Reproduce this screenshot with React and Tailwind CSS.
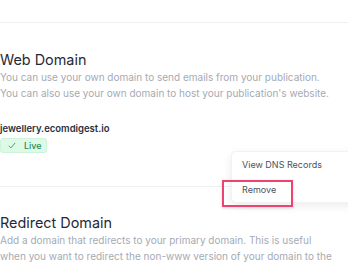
import React from 'react';

function Section({ title, lines, children }) {
  return (
    <div>
      <h2 className="text-[14.4px] leading-[20px] text-[#1f2937]">{title}</h2>
      <p className="-mt-[1px] text-[10px] leading-[16px] text-[#a5aab3]">
        {lines.map((l, i) => (
          <span key={i} className="block whitespace-nowrap">{l}</span>
        ))}
      </p>
      {children}
    </div>
  );
}

export default function App() {
  return (
    <div className="relative w-[348px] h-[268px] overflow-hidden bg-white font-['Inter',sans-serif]">
      <div className="h-[23px] border-b border-[#eeeff1]" />

      <div className="pt-[27px]">
        <Section
          title="Web Domain"
          lines={[
            'You can use your own domain to send emails from your publication.',
            "You can also use your own domain to host your publication's website.",
          ]}
        >
          <div className="mt-[20px] text-[9.5px] leading-[16px] font-semibold text-[#27303d]">
            jewellery.ecomdigest.io
          </div>
          <div className="mt-[1px] flex items-center w-[47px] h-[15px] rounded-[3px] bg-[#dcfae6] border border-[#cdf3da] text-[9px] font-medium text-[#2f8a52]">
            <svg className="ml-[7px]" width="8" height="7" viewBox="0 0 8 7" fill="none">
              <path d="M0.8 3.8 L2.9 5.9 L7.2 0.9" stroke="#3a9a5e" strokeWidth="0.9" />
            </svg>
            <span className="ml-[8px]">Live</span>
          </div>
        </Section>

        <div className="mt-[33px] w-[232px] border-b border-[#eeeff1]" />

        <div className="pt-[26px]">
          <Section
            title="Redirect Domain"
            lines={[
              'Add a domain that redirects to your primary domain. This is useful',
              'when you want to redirect the non-www version of your domain to the',
            ]}
          />
        </div>
      </div>

      {/* dropdown menu */}
      <div className="absolute left-[231px] top-[151px] w-[140px] h-[52px] rounded-[5px] bg-white border border-[#f1f2f4] shadow-[0_3px_10px_rgba(0,0,0,0.08)] text-[9px] text-[#4b5260]">
        <div className="pl-[10px] pt-[7px] leading-[12px]">View DNS Records</div>
        <div className="pl-[10px] pt-[13px] leading-[12px]">Remove</div>
      </div>

      {/* highlight */}
      <div className="absolute left-[222px] top-[180px] w-[71px] h-[27px] border-2 border-[#ec4470] shadow-[0_1px_3px_rgba(0,0,0,0.15)]" />
    </div>
  );
}
